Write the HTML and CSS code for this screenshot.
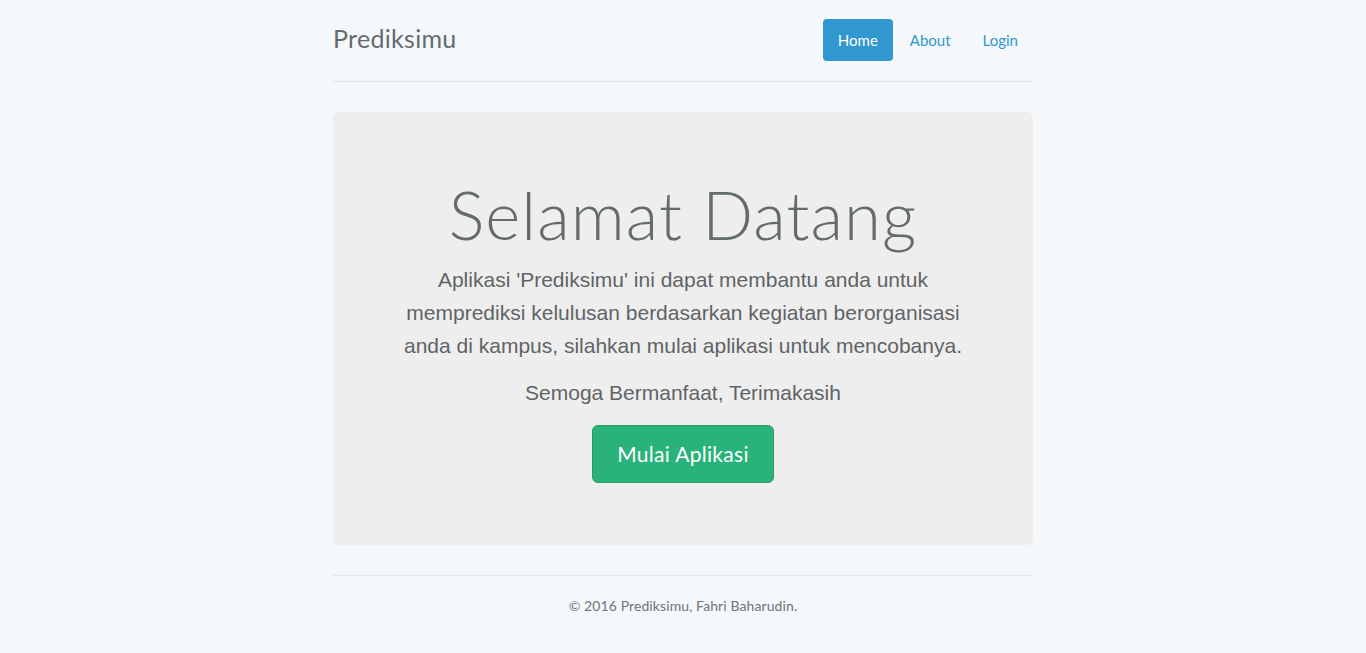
FILE: index.html
```html
<!DOCTYPE html>
<html lang="id">
<head>
<meta charset="utf-8">
<title>Prediksimu</title>
<link rel="stylesheet" href="styles.css">
</head>
<body>
<div class="container">
  <header class="header">
    <h3 class="brand">Prediksimu</h3>
    <nav>
      <ul class="nav-pills">
        <li><a class="active" href="#">Home</a></li>
        <li><a href="#">About</a></li>
        <li><a href="#">Login</a></li>
      </ul>
    </nav>
  </header>

  <section class="jumbotron">
    <h1>Selamat Datang</h1>
    <p class="lead">Aplikasi 'Prediksimu' ini dapat membantu anda untuk memprediksi kelulusan berdasarkan kegiatan berorganisasi anda di kampus, silahkan mulai aplikasi untuk mencobanya.</p>
    <p class="lead">Semoga Bermanfaat, Terimakasih</p>
    <a class="btn-success" href="#">Mulai Aplikasi</a>
  </section>

  <footer class="footer">
    <p>© 2016 Prediksimu, Fahri Baharudin.</p>
  </footer>
</div>
</body>
</html>
```

FILE: styles.css
```css
* { box-sizing: border-box; }
html, body { margin: 0; }
body {
  background: #f5f8fa;
  color: #636b6f;
  font-family: "Lato", "Open Sans", sans-serif;
  font-size: 14px;
  line-height: 1.6;
  padding: 20px 0;
}
.container {
  width: 700px;
  margin: 0 auto;
}
.header {
  display: flex;
  justify-content: space-between;
  align-items: flex-start;
  padding-bottom: 20px;
  border-bottom: 1px solid #e5e5e5;
  margin-bottom: 30px;
}
.brand {
  margin: 0;
  font-size: 25px;
  font-weight: 400;
  line-height: 36px;
  color: #636b6f;
  letter-spacing: 0.3px;
}
.nav-pills {
  list-style: none;
  margin: -1px 0 0;
  padding: 0;
  display: flex;
  gap: 2px;
}
.nav-pills a {
  display: block;
  padding: 10px 15px;
  border-radius: 4px;
  color: #3097d1;
  text-decoration: none;
  font-size: 15px;
  line-height: 22px;
}
.nav-pills a.active {
  background: #3097d1;
  color: #fff;
}
.jumbotron {
  background: #eeeeee;
  border-radius: 6px;
  padding: 48px 60px 62px;
  text-align: center;
  margin-bottom: 30px;
}
.jumbotron h1 {
  margin: 21px 0 15px;
  font-size: 67px;
  font-weight: 300;
  line-height: 1.0;
  color: #636b6f;
  letter-spacing: 1.1px;
}
.lead {
  font-family: "Liberation Sans", Arial, sans-serif;
  font-size: 21px;
  line-height: 33px;
  margin: 2px 0 14px;
  color: #5f6466;
}
.btn-success {
  display: inline-block;
  margin-top: 2px;
  padding: 14px 24px;
  font-size: 21px;
  line-height: 28px;
  color: #fff;
  background: #2ab27b;
  border: 1px solid #259d6d;
  border-radius: 6px;
  text-decoration: none;
  letter-spacing: 0.3px;
}
.footer {
  border-top: 1px solid #e5e5e5;
  padding-top: 19px;
  text-align: center;
}
.footer p {
  margin: 0;
  font-size: 14px;
  color: #6f7478;
  letter-spacing: 0.1px;
}
```
